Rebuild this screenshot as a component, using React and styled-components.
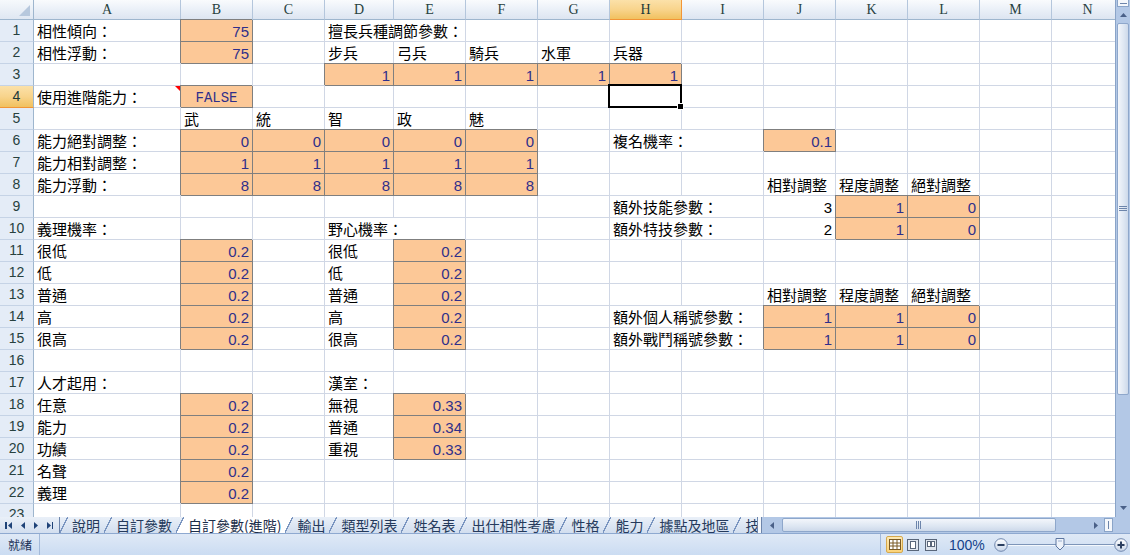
import React from "react";
import styled, { createGlobalStyle, css } from "styled-components";

const GlobalStyle = createGlobalStyle`
  html, body {
    margin: 0;
    padding: 0;
    background: #fff;
    overflow: hidden;
  }
`;

const CJK = `"Liberation Sans", "Noto Sans CJK TC", sans-serif`;

const COLUMNS = [
  { id: "A", w: 147 },
  { id: "B", w: 72 },
  { id: "C", w: 72 },
  { id: "D", w: 69 },
  { id: "E", w: 72 },
  { id: "F", w: 72 },
  { id: "G", w: 72 },
  { id: "H", w: 72 },
  { id: "I", w: 82 },
  { id: "J", w: 72 },
  { id: "K", w: 72 },
  { id: "L", w: 72 },
  { id: "M", w: 72 },
  { id: "N", w: 72 },
];

const ROW_COUNT = 23;
const ACTIVE = { col: "H", row: 4 };

const label = (v, span = 1) => ({ v, kind: "label", span });
const input = (v) => ({ v, kind: "input" });
const num = (v) => ({ v, kind: "num" });

const five = (v) => ({ B: input(v), C: input(v), D: input(v), E: input(v), F: input(v) });
const adjustHead = { J: label("相對調整"), K: label("程度調整"), L: label("絕對調整") };

const SHEET = {
  1: { A: label("相性傾向："), B: input(75), D: label("擅長兵種調節參數：", 2) },
  2: {
    A: label("相性浮動："),
    B: input(75),
    D: label("步兵"),
    E: label("弓兵"),
    F: label("騎兵"),
    G: label("水軍"),
    H: label("兵器"),
  },
  3: { D: input(1), E: input(1), F: input(1), G: input(1), H: input(1) },
  4: { A: { ...label("使用進階能力："), note: true }, B: { v: "FALSE", kind: "flag" } },
  5: { B: label("武"), C: label("統"), D: label("智"), E: label("政"), F: label("魅") },
  6: { A: label("能力絕對調整："), ...five(0), H: label("複名機率：", 2), J: input(0.1) },
  7: { A: label("能力相對調整："), ...five(1) },
  8: { A: label("能力浮動："), ...five(8), ...adjustHead },
  9: { H: label("額外技能參數：", 2), J: num(3), K: input(1), L: input(0) },
  10: { A: label("義理機率："), D: label("野心機率：", 2), H: label("額外特技參數：", 2), J: num(2), K: input(1), L: input(0) },
  11: { A: label("很低"), B: input(0.2), D: label("很低"), E: input(0.2) },
  12: { A: label("低"), B: input(0.2), D: label("低"), E: input(0.2) },
  13: { A: label("普通"), B: input(0.2), D: label("普通"), E: input(0.2), ...adjustHead },
  14: { A: label("高"), B: input(0.2), D: label("高"), E: input(0.2), H: label("額外個人稱號參數：", 2), J: input(1), K: input(1), L: input(0) },
  15: { A: label("很高"), B: input(0.2), D: label("很高"), E: input(0.2), H: label("額外戰鬥稱號參數：", 2), J: input(1), K: input(1), L: input(0) },
  17: { A: label("人才起用："), D: label("漢室：") },
  18: { A: label("任意"), B: input(0.2), D: label("無視"), E: input(0.33) },
  19: { A: label("能力"), B: input(0.2), D: label("普通"), E: input(0.34) },
  20: { A: label("功績"), B: input(0.2), D: label("重視"), E: input(0.33) },
  21: { A: label("名聲"), B: input(0.2) },
  22: { A: label("義理"), B: input(0.2) },
};

const TABS = ["說明", "自訂參數", "自訂參數(進階)", "輸出", "類型列表", "姓名表", "出仕相性考慮", "性格", "能力", "據點及地區", "技能"];
const ACTIVE_TAB = 2;

/* ---------- window frame ---------- */

const Window = styled.div`
  width: 1130px;
  height: 555px;
  display: flex;
  flex-direction: column;
  overflow: hidden;
  background: #fff;
`;

const Workspace = styled.div`
  display: flex;
  height: 517px;
`;

/* ---------- grid ---------- */

const Sheet = styled.div`
  flex: 1;
  overflow: hidden;
  display: grid;
  grid-template-columns: 34px ${COLUMNS.map((c) => `${c.w}px`).join(" ")};
  grid-template-rows: 20px;
  grid-auto-rows: 22px;
  align-content: start;
`;

const Corner = styled.div`
  position: relative;
  box-sizing: border-box;
  border-right: 1px solid #9eb6ce;
  border-bottom: 1px solid #9eb6ce;
  background: linear-gradient(#f6f9fc, #dfe7f2);

  &::after {
    content: "";
    position: absolute;
    right: 3px;
    bottom: 3px;
    border-bottom: 11px solid #b7c8dd;
    border-left: 11px solid transparent;
  }
`;

const activeHead = css`
  background: linear-gradient(#fbe1a9, #f8d48c 50%, #f1c15f);
  color: #1d3a3a;
`;

const ColHead = styled.div`
  box-sizing: border-box;
  border-right: 1px solid ${(p) => (p.$active ? "#f29536" : "#b4c6dc")};
  border-bottom: 1px solid ${(p) => (p.$active ? "#f29536" : "#9eb6ce")};
  background: linear-gradient(#f9fbfd, #e9eff7 55%, #dde5f1);
  font-family: "Liberation Serif", serif;
  font-size: 14px;
  line-height: 19px;
  text-align: center;
  color: #27413e;
  ${(p) => p.$active && activeHead}
`;

const RowHead = styled.div`
  box-sizing: border-box;
  border-right: 1px solid #9eb6ce;
  border-bottom: 1px solid ${(p) => (p.$active ? "#f29536" : "#c5d3e6")};
  background: #e4ecf7;
  font-family: "Liberation Sans", sans-serif;
  font-size: 14px;
  line-height: 21px;
  text-align: center;
  color: #27413e;
  ${(p) => p.$active && activeHead}
`;

const cellKinds = {
  label: css`
    justify-content: flex-start;
  `,
  num: css`
    justify-content: flex-end;
  `,
  input: css`
    justify-content: flex-end;
    color: #2f2f8a;
    background: #fcc897;
    border-color: #7f7f7f;
    box-shadow: -1px -1px 0 #7f7f7f;
  `,
  flag: css`
    justify-content: center;
    color: #2f2f8a;
    background: #fcc897;
    border-color: #7f7f7f;
    box-shadow: -1px -1px 0 #7f7f7f;
    font-family: "Liberation Mono", monospace;
    font-size: 14px;
  `,
};

const Cell = styled.div`
  position: relative;
  box-sizing: border-box;
  grid-column: span ${(p) => p.$span};
  display: flex;
  align-items: center;
  padding: 2px 3px 0 3px;
  border-right: 1px solid #d0d7e5;
  border-bottom: 1px solid #d0d7e5;
  font-family: ${CJK};
  font-size: 15px;
  line-height: 20px;
  color: #000;
  white-space: nowrap;
  ${(p) => p.$kind && cellKinds[p.$kind]}
`;

const NoteMark = styled.span`
  position: absolute;
  top: 0;
  right: 0;
  width: 0;
  height: 0;
  border-top: 5px solid #ff0000;
  border-left: 5px solid transparent;
`;

const Selection = styled.span`
  position: absolute;
  left: -2px;
  top: -2px;
  right: -1px;
  bottom: -1px;
  border: 2px solid #000;
  z-index: 2;

  &::after {
    content: "";
    position: absolute;
    right: -4px;
    bottom: -4px;
    width: 5px;
    height: 5px;
    background: #000;
    border: 1px solid #fff;
  }
`;

/* ---------- vertical scroll bar ---------- */

const VScroll = styled.div`
  width: 15px;
  display: flex;
  flex-direction: column;
  background: #b3c8e6;
  border-left: 1px solid #8aa4c8;
  box-sizing: border-box;
`;

const SplitBox = styled.div`
  height: 6px;
  margin: 0 1px;
  background: #f4f7fb;
  border: 1px solid #8aa4c8;
  border-top: none;
  display: flex;
  align-items: center;
  justify-content: center;

  &::before {
    content: "";
    width: 7px;
    height: 1px;
    background: #6d85ab;
  }
`;

const ArrowBox = styled.div`
  height: ${(p) => p.$h || 15}px;
  display: flex;
  align-items: center;
  justify-content: center;
  flex-shrink: 0;
`;

const Thumb = styled.div`
  box-sizing: border-box;
  margin: 0 1px;
  border: 1px solid #8ea7cb;
  border-radius: 2px;
  background: linear-gradient(90deg, #f3f6fb, #dde6f2 60%, #cdd9ea);
  display: flex;
  align-items: center;
  justify-content: center;
  flex-shrink: 0;
`;

const Trough = styled.div`
  flex: 1;
`;

const Tri = ({ dir, color = "#4a6088" }) => {
  const pts = {
    up: "0,4 3.5,0 7,4",
    down: "0,0 3.5,4 7,0",
    left: "4,0 0,3.5 4,7",
    right: "0,0 4,3.5 0,7",
  }[dir];
  const vertical = dir === "up" || dir === "down";
  return (
    <svg width={vertical ? 7 : 4} height={vertical ? 4 : 7} viewBox={vertical ? "0 0 7 4" : "0 0 4 7"}>
      <polygon points={pts} fill={color} />
    </svg>
  );
};

const Grip = ({ vertical }) => (
  <svg width={vertical ? 8 : 6} height={vertical ? 6 : 8}>
    {[0, 2, 4].map((o) =>
      vertical ? (
        <line key={o} x1="0" x2="8" y1={o + 0.5} y2={o + 0.5} stroke="#6d85ab" />
      ) : (
        <line key={o} y1="0" y2="8" x1={o + 0.5} x2={o + 0.5} stroke="#6d85ab" />
      )
    )}
  </svg>
);

/* ---------- sheet tabs + horizontal scroll bar ---------- */

const BottomBar = styled.div`
  height: 16px;
  display: flex;
  background: linear-gradient(#eaf0f8, #d2deef);
  border-bottom: 1px solid #8ea9d0;
  box-sizing: content-box;
`;

const NavButtons = styled.div`
  width: 60px;
  display: flex;
  align-items: center;
  justify-content: space-between;
  padding: 0 6px 0 5px;
  box-sizing: border-box;
  border-right: 1px solid #6d85ab;
`;

const NavGlyph = styled.span`
  display: flex;
  align-items: center;
  gap: 1px;

  &::before,
  &::after {
    content: "";
    width: 1.5px;
    height: 7px;
    background: #1f4378;
  }
  &::before {
    display: ${(p) => (p.$bar === "left" ? "block" : "none")};
  }
  &::after {
    display: ${(p) => (p.$bar === "right" ? "block" : "none")};
  }
`;

const TabStrip = styled.div`
  width: 697px;
  display: flex;
  overflow: hidden;
`;

const Tab = styled.div`
  flex-shrink: 0;
  padding: 0 4px;
  font-family: "Noto Sans CJK TC", sans-serif;
  font-size: 14px;
  line-height: 16px;
  color: #253a5c;
  white-space: nowrap;
  ${(p) =>
    p.$active &&
    css`
      background: #fff;
      color: #1c2e4a;
    `}
`;

const Slash = styled.span`
  flex-shrink: 0;
  width: 8px;
  height: 16px;
  background: linear-gradient(
    to bottom right,
    ${(p) => (p.$fill === "before" ? "#fff" : "transparent")} calc(50% - 0.8px),
    #7a95c0 calc(50% - 0.8px),
    #7a95c0 calc(50% + 0.6px),
    ${(p) => (p.$fill === "after" ? "#fff" : "transparent")} calc(50% + 0.6px)
  );
`;

const Splitter = styled.div`
  width: 5px;
  box-sizing: border-box;
  background: #f4f7fb;
  border-left: 1px solid #6d85ab;
  border-right: 1px solid #6d85ab;
`;

const HScroll = styled.div`
  flex: 1;
  display: flex;
  align-items: stretch;
  background: #b3c8e6;
`;

const HArrow = styled.div`
  width: ${(p) => p.$w}px;
  display: flex;
  align-items: center;
  justify-content: center;
  flex-shrink: 0;
`;

const HThumb = styled(Thumb)`
  width: 274px;
  margin: 1px 0;
  background: linear-gradient(#f3f6fb, #dde6f2 60%, #cdd9ea);
`;

const HSplit = styled.div`
  width: 7px;
  margin: 1px 2px 1px 0;
  background: #f4f7fb;
  border: 1px solid #8aa4c8;
  display: flex;
  align-items: center;
  justify-content: center;

  &::before {
    content: "";
    width: 1px;
    height: 8px;
    background: #6d85ab;
  }
`;

/* ---------- status bar ---------- */

const StatusBar = styled.div`
  flex: 1;
  display: flex;
  align-items: center;
  background: linear-gradient(#dfe9f6, #cbdcf2);
  font-family: "Noto Sans CJK TC", sans-serif;
  color: #1c3257;
`;

const Ready = styled.div`
  width: 40px;
  height: 100%;
  box-sizing: border-box;
  padding-left: 8px;
  font-size: 12px;
  line-height: 21px;
  border-right: 1px solid #a2b9da;
`;

const StatusRight = styled.div`
  margin-left: auto;
  height: 100%;
  width: 250px;
  box-sizing: border-box;
  border-left: 1px solid #a2b9da;
  display: flex;
  align-items: center;
  padding-left: 5px;
`;

const ViewButtons = styled.div`
  display: flex;
  gap: 1px;
`;

const ViewButton = styled.div`
  width: 17px;
  height: 17px;
  box-sizing: border-box;
  display: flex;
  align-items: center;
  justify-content: center;
  border: 1px solid transparent;
  border-radius: 2px;
  ${(p) =>
    p.$on &&
    css`
      background: linear-gradient(#fde9b4, #fbd37a);
      border-color: #d6a94d;
    `}
`;

const ZoomText = styled.span`
  margin-left: 10px;
  font-family: "Liberation Sans", sans-serif;
  font-size: 14px;
  color: #15428b;
`;

const ZoomRow = styled.div`
  display: flex;
  align-items: center;
  margin-left: 9px;
`;

const ZoomTrack = styled.div`
  position: relative;
  width: 106px;
  height: 13px;
  display: flex;
  align-items: center;

  &::before {
    content: "";
    width: 100%;
    height: 1px;
    background: #7d95b9;
    box-shadow: 0 1px 0 #f4f8fd;
  }
`;

const ZoomKnob = styled.svg`
  position: absolute;
  left: 47px;
  top: 0;
`;

const RoundButton = ({ plus }) => (
  <svg width="14" height="14" viewBox="0 0 14 14">
    <defs>
      <linearGradient id={plus ? "rbp" : "rbm"} x1="0" y1="0" x2="0" y2="1">
        <stop offset="0" stopColor="#ffffff" />
        <stop offset="1" stopColor="#c9d6e9" />
      </linearGradient>
    </defs>
    <circle cx="7" cy="7" r="6.3" fill={`url(#${plus ? "rbp" : "rbm"})`} stroke="#6f86ad" />
    <rect x="3.5" y="6" width="7" height="2" fill="#2b3f60" />
    {plus && <rect x="6" y="3.5" width="2" height="7" fill="#2b3f60" />}
  </svg>
);

const NormalIcon = () => (
  <svg width="12" height="11" viewBox="0 0 12 11">
    <rect x="0.5" y="0.5" width="11" height="10" fill="#fff" stroke="#7a5a25" />
    <line x1="0.5" x2="11.5" y1="4" y2="4" stroke="#7a5a25" />
    <line x1="0.5" x2="11.5" y1="7" y2="7" stroke="#7a5a25" />
    <line x1="4" x2="4" y1="0.5" y2="10.5" stroke="#7a5a25" />
    <line x1="8" x2="8" y1="0.5" y2="10.5" stroke="#7a5a25" />
  </svg>
);

const LayoutIcon = () => (
  <svg width="12" height="12" viewBox="0 0 12 12">
    <rect x="0.5" y="0.5" width="11" height="11" fill="#dfe5ee" stroke="#59667a" />
    <rect x="3.5" y="2.5" width="5" height="7" fill="#fff" stroke="#59667a" />
  </svg>
);

const BreakIcon = () => (
  <svg width="12" height="12" viewBox="0 0 12 12">
    <rect x="0.5" y="0.5" width="11" height="11" fill="#dfe5ee" stroke="#59667a" />
    <rect x="2.5" y="2.5" width="3" height="5" fill="#fff" stroke="#59667a" />
    <rect x="6.5" y="2.5" width="3" height="5" fill="#fff" stroke="#59667a" />
  </svg>
);

/* ---------- pieces ---------- */

function SheetRow({ n }) {
  const data = SHEET[n] || {};
  const cells = [];
  for (let i = 0; i < COLUMNS.length; ) {
    const col = COLUMNS[i];
    const c = data[col.id];
    const span = (c && c.span) || 1;
    const selected = ACTIVE.col === col.id && ACTIVE.row === n;
    cells.push(
      <Cell key={col.id} $span={span} $kind={c && c.kind}>
        {c && c.v}
        {c && c.note && <NoteMark />}
        {selected && <Selection />}
      </Cell>
    );
    i += span;
  }
  return (
    <>
      <RowHead $active={ACTIVE.row === n}>{n}</RowHead>
      {cells}
    </>
  );
}

function SheetTabs() {
  const items = [];
  TABS.forEach((name, i) => {
    const fill = i === ACTIVE_TAB ? "after" : i === ACTIVE_TAB + 1 ? "before" : null;
    items.push(<Slash key={`s${i}`} $fill={fill} />);
    items.push(
      <Tab key={name} $active={i === ACTIVE_TAB}>
        {name}
      </Tab>
    );
  });
  return <TabStrip>{items}</TabStrip>;
}

const App = () => {
  const rows = Array.from({ length: ROW_COUNT }, (_, i) => i + 1);
  return (
    <Window>
      <GlobalStyle />
      <Workspace>
        <Sheet>
          <Corner />
          {COLUMNS.map((c) => (
            <ColHead key={c.id} $active={c.id === ACTIVE.col}>
              {c.id}
            </ColHead>
          ))}
          {rows.map((n) => (
            <SheetRow key={n} n={n} />
          ))}
        </Sheet>
        <VScroll>
          <SplitBox />
          <ArrowBox $h={16}>
            <Tri dir="up" />
          </ArrowBox>
          <Thumb style={{ height: 372 }}>
            <Grip vertical />
          </Thumb>
          <Trough />
          <ArrowBox $h={18}>
            <Tri dir="down" />
          </ArrowBox>
        </VScroll>
      </Workspace>

      <BottomBar>
        <NavButtons>
          <NavGlyph $bar="left">
            <Tri dir="left" color="#1f4378" />
          </NavGlyph>
          <NavGlyph>
            <Tri dir="left" color="#1f4378" />
          </NavGlyph>
          <NavGlyph>
            <Tri dir="right" color="#1f4378" />
          </NavGlyph>
          <NavGlyph $bar="right">
            <Tri dir="right" color="#1f4378" />
          </NavGlyph>
        </NavButtons>
        <SheetTabs />
        <Splitter />
        <HScroll>
          <HArrow $w={20}>
            <Tri dir="left" />
          </HArrow>
          <HThumb>
            <Grip />
          </HThumb>
          <Trough />
          <HArrow $w={16}>
            <Tri dir="right" />
          </HArrow>
          <HSplit />
          <HArrow $w={15} />
        </HScroll>
      </BottomBar>

      <StatusBar>
        <Ready>就緒</Ready>
        <StatusRight>
          <ViewButtons>
            <ViewButton $on>
              <NormalIcon />
            </ViewButton>
            <ViewButton>
              <LayoutIcon />
            </ViewButton>
            <ViewButton>
              <BreakIcon />
            </ViewButton>
          </ViewButtons>
          <ZoomText>100%</ZoomText>
          <ZoomRow>
            <RoundButton />
            <ZoomTrack>
              <ZoomKnob width="10" height="13" viewBox="0 0 10 13">
                <path d="M1 0.5 H9 V8 L5 12 L1 8 Z" fill="#eef3fa" stroke="#5d76a0" />
                <line x1="3" x2="7" y1="3" y2="3" stroke="#9aaed0" />
              </ZoomKnob>
            </ZoomTrack>
            <RoundButton plus />
          </ZoomRow>
        </StatusRight>
      </StatusBar>
    </Window>
  );
};

export default App;
